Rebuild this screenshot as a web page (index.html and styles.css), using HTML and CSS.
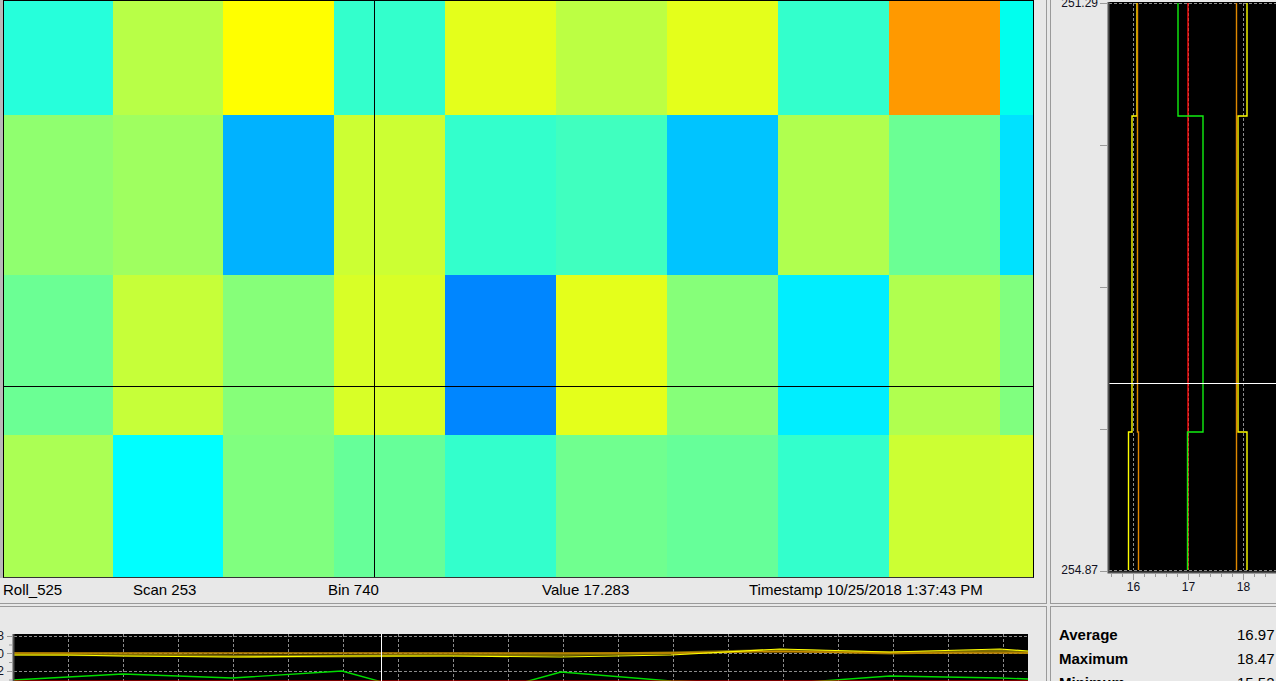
FILE: index.html
```html
<!DOCTYPE html>
<html>
<head>
<meta charset="utf-8">
<link rel="stylesheet" href="styles.css">
</head>
<body>
<div class="app">
  <section class="panel panel-tl">
    <div class="map-row">
      <div class="strip"></div>
      <div class="heatmap">
        <div class="cells">
          <div style="background:#26ffdb"></div><div style="background:#b8ff47"></div><div style="background:#ffff00"></div><div style="background:#33ffcc"></div><div style="background:#e4ff1b"></div><div style="background:#bcff43"></div><div style="background:#e4ff1b"></div><div style="background:#33ffcc"></div><div style="background:#ff9900"></div><div style="background:#00ffee"></div>
          <div style="background:#90ff6f"></div><div style="background:#9fff60"></div><div style="background:#00b2ff"></div><div style="background:#ccff33"></div><div style="background:#33ffcc"></div><div style="background:#40ffbf"></div><div style="background:#00c4ff"></div><div style="background:#b0ff4f"></div><div style="background:#6bff94"></div><div style="background:#00e2ff"></div>
          <div style="background:#6bff94"></div><div style="background:#c6ff39"></div><div style="background:#86ff79"></div><div style="background:#d8ff27"></div><div style="background:#0086ff"></div><div style="background:#e4ff1b"></div><div style="background:#86ff79"></div><div style="background:#00eeff"></div><div style="background:#b0ff4f"></div><div style="background:#80ff7f"></div>
          <div style="background:#abff54"></div><div style="background:#00ffff"></div><div style="background:#80ff7f"></div><div style="background:#66ff99"></div><div style="background:#33ffcc"></div><div style="background:#70ff8f"></div><div style="background:#66ff99"></div><div style="background:#33ffcc"></div><div style="background:#ccff33"></div><div style="background:#d4ff2b"></div>
        </div>
        <div class="cross-v"></div>
        <div class="cross-h"></div>
      </div>
    </div>
    <div class="status">
      <span>Roll_525</span>
      <span>Scan 253</span>
      <span>Bin 740</span>
      <span>Value 17.283</span>
      <span>Timestamp 10/25/2018 1:37:43 PM</span>
    </div>
  </section>

  <section class="panel panel-tr">
    <svg class="profile" width="225" height="603" viewBox="0 0 225 603">
      <rect x="57" y="2" width="170" height="570" fill="#000"/>
      <g stroke="#8c8c8c" stroke-width="1" stroke-dasharray="3 2" fill="none">
        <path d="M58 3.5H225M58 570.5H225"/>
        <path d="M82.5 3V570M137.5 3V570M192.5 3V570"/>
      </g>
      <g fill="none" stroke-width="1.4">
        <path d="M86 3V116H81V432H77.5V570" stroke="#ffff00"/>
        <path d="M86.5 3V432H87.5V570" stroke="#e08800"/>
        <path d="M137 3V570" stroke="#ff1010"/>
        <path d="M127 3V116H152V432H136.5V570" stroke="#10ee10"/>
        <path d="M196 3V116H187V432H196V570" stroke="#ffff00"/>
        <path d="M185.5 3V570" stroke="#e08800"/>
      </g>
      <path d="M58 383.5H225" stroke="#fff" stroke-width="1"/>
      <path d="M57.5 2V573M56.5 572.5H225" stroke="#505050" stroke-width="2" fill="none"/>
      <g stroke="#9a9a9a" stroke-width="1">
        <path d="M49 3.5H56M49 145.5H56M49 287.5H56M49 429.5H56M49 571.5H56"/>
        <path d="M82.5 574V580M137.5 574V580M192.5 574V580"/>
        <path d="M60.5 574V577M71.5 574V577M93.5 574V577M104.5 574V577M115.5 574V577M126.5 574V577M148.5 574V577M159.5 574V577M170.5 574V577M181.5 574V577M203.5 574V577M214.5 574V577"/>
      </g>
      <g class="axis-text">
        <text x="47" y="7" text-anchor="end">251.29</text>
        <text x="47" y="574" text-anchor="end">254.87</text>
        <text x="82.5" y="591" text-anchor="middle">16</text>
        <text x="137.5" y="591" text-anchor="middle">17</text>
        <text x="192.5" y="591" text-anchor="middle">18</text>
      </g>
    </svg>
  </section>

  <section class="panel panel-bl">
    <svg class="trend" width="1046" height="75" viewBox="0 0 1046 75">
      <rect x="13" y="27" width="1015" height="60" fill="#000"/>
      <g stroke="#8c8c8c" stroke-width="1" stroke-dasharray="3 2" fill="none">
        <path d="M14 29.5H1028M14 46.5H1028M14 64.5H1028"/>
        <path d="M68.5 27V75M123.5 27V75M178.5 27V75M233.5 27V75M288.5 27V75M343.5 27V75M398.5 27V75M453.5 27V75M508.5 27V75M563.5 27V75M618.5 27V75M673.5 27V75M728.5 27V75M783.5 27V75M838.5 27V75M893.5 27V75M948.5 27V75M1003.5 27V75"/>
      </g>
      <g fill="none" stroke-linejoin="round">
        <polyline points="13,47 123,48 232,49 342,49 452,48 561,47.5 671,46 780,43.5 890,46 1000,44 1028,45.5" stroke="#7d6c00" stroke-width="3"/>
        <polyline points="13,46 232,46 452,46 671,46 780,44.5 890,46 1028,46" stroke="#c88a00" stroke-width="1.3"/>
        <polyline points="13,48 68,48 123,49 232,50 342,49 452,49 561,50 671,48 780,42 890,45 1000,42 1028,44" stroke="#ffff00" stroke-width="1.2"/>
        <polyline points="13,73 123,67 232,71 342,64 382,75 521,76 561,65 671,74 780,77 890,69 1000,71 1028,72" stroke="#00dd00" stroke-width="1.4"/>
        <polyline points="13,74.5 1028,74.5" stroke="#ff0000" stroke-width="2"/>
      </g>
      <path d="M381.5 27V75" stroke="#fff" stroke-width="1"/>
      <path d="M13.5 27V75" stroke="#505050" stroke-width="2"/>
      <g stroke="#9a9a9a" stroke-width="1">
        <path d="M7 29.5H12M7 46.5H12M7 64.5H12M9 38H12M9 55.5H12M9 73H12"/>
      </g>
      <g class="axis-text">
        <text x="4" y="33" text-anchor="end">18</text>
        <text x="4" y="50.5" text-anchor="end">17.0</text>
        <text x="4" y="68" text-anchor="end">16.2</text>
      </g>
    </svg>
  </section>

  <section class="panel panel-br">
    <div class="stats">
      <span class="label">Average</span><span class="value">16.97</span>
      <span class="label">Maximum</span><span class="value">18.47</span>
      <span class="label">Minimum</span><span class="value">15.52</span>
    </div>
  </section>
</div>
</body>
</html>
```

FILE: styles.css
```css
html, body {
  margin: 0;
  padding: 0;
  background: #ffffff;
}

body {
  font-family: "Liberation Sans", Arial, sans-serif;
  color: #000;
}

.app {
  width: 1276px;
  height: 681px;
  overflow: hidden;
  background: #e8e8e8;
  display: grid;
  grid-template-columns: 1047px 1fr;
  grid-template-rows: 604px 1fr;
  column-gap: 3px;
  row-gap: 2px;
}

.panel {
  box-sizing: border-box;
  overflow: hidden;
  position: relative;
  min-width: 0;
  min-height: 0;
}

.panel-tl {
  border-right: 1px solid #9a9a9a;
  border-bottom: 1px solid #9a9a9a;
  display: flex;
  flex-direction: column;
}

.panel-tr {
  border-left: 1px solid #9a9a9a;
  border-bottom: 1px solid #9a9a9a;
}

.panel-bl {
  border-top: 1px solid #9a9a9a;
  border-right: 1px solid #9a9a9a;
}

.panel-br {
  border-top: 1px solid #9a9a9a;
  border-left: 1px solid #9a9a9a;
}

.map-row {
  display: flex;
  height: 578px;
}

.strip {
  width: 3px;
  background: #b8b8b8;
}

.heatmap {
  position: relative;
  box-sizing: border-box;
  width: 1031px;
  height: 578px;
  border: 1px solid #000;
  border-bottom-color: #333;
}

.cells {
  display: grid;
  grid-template-columns: 109px 110px 111px 111px 111px 111px 111px 111px 111px 1fr;
  grid-template-rows: 114px 160px 160px 142px;
  width: 100%;
  height: 100%;
}

.cross-v {
  position: absolute;
  left: 370px;
  top: 0;
  bottom: 0;
  width: 1px;
  background: #000;
}

.cross-h {
  position: absolute;
  top: 385px;
  left: 0;
  right: 0;
  height: 1px;
  background: #000;
}

.status {
  display: grid;
  grid-template-columns: 130px 195px 214px 207px auto;
  padding: 3px 0 0 3px;
  font-size: 15px;
  line-height: 18px;
  white-space: nowrap;
}

.profile,
.trend {
  display: block;
}

.axis-text {
  font-family: "Liberation Sans", Arial, sans-serif;
  font-size: 12px;
  fill: #111122;
}

.stats {
  display: grid;
  grid-template-columns: 178px auto;
  padding: 16px 0 0 8px;
  font-size: 15px;
  line-height: 24px;
  white-space: nowrap;
}

.stats .label {
  font-weight: bold;
}
```
